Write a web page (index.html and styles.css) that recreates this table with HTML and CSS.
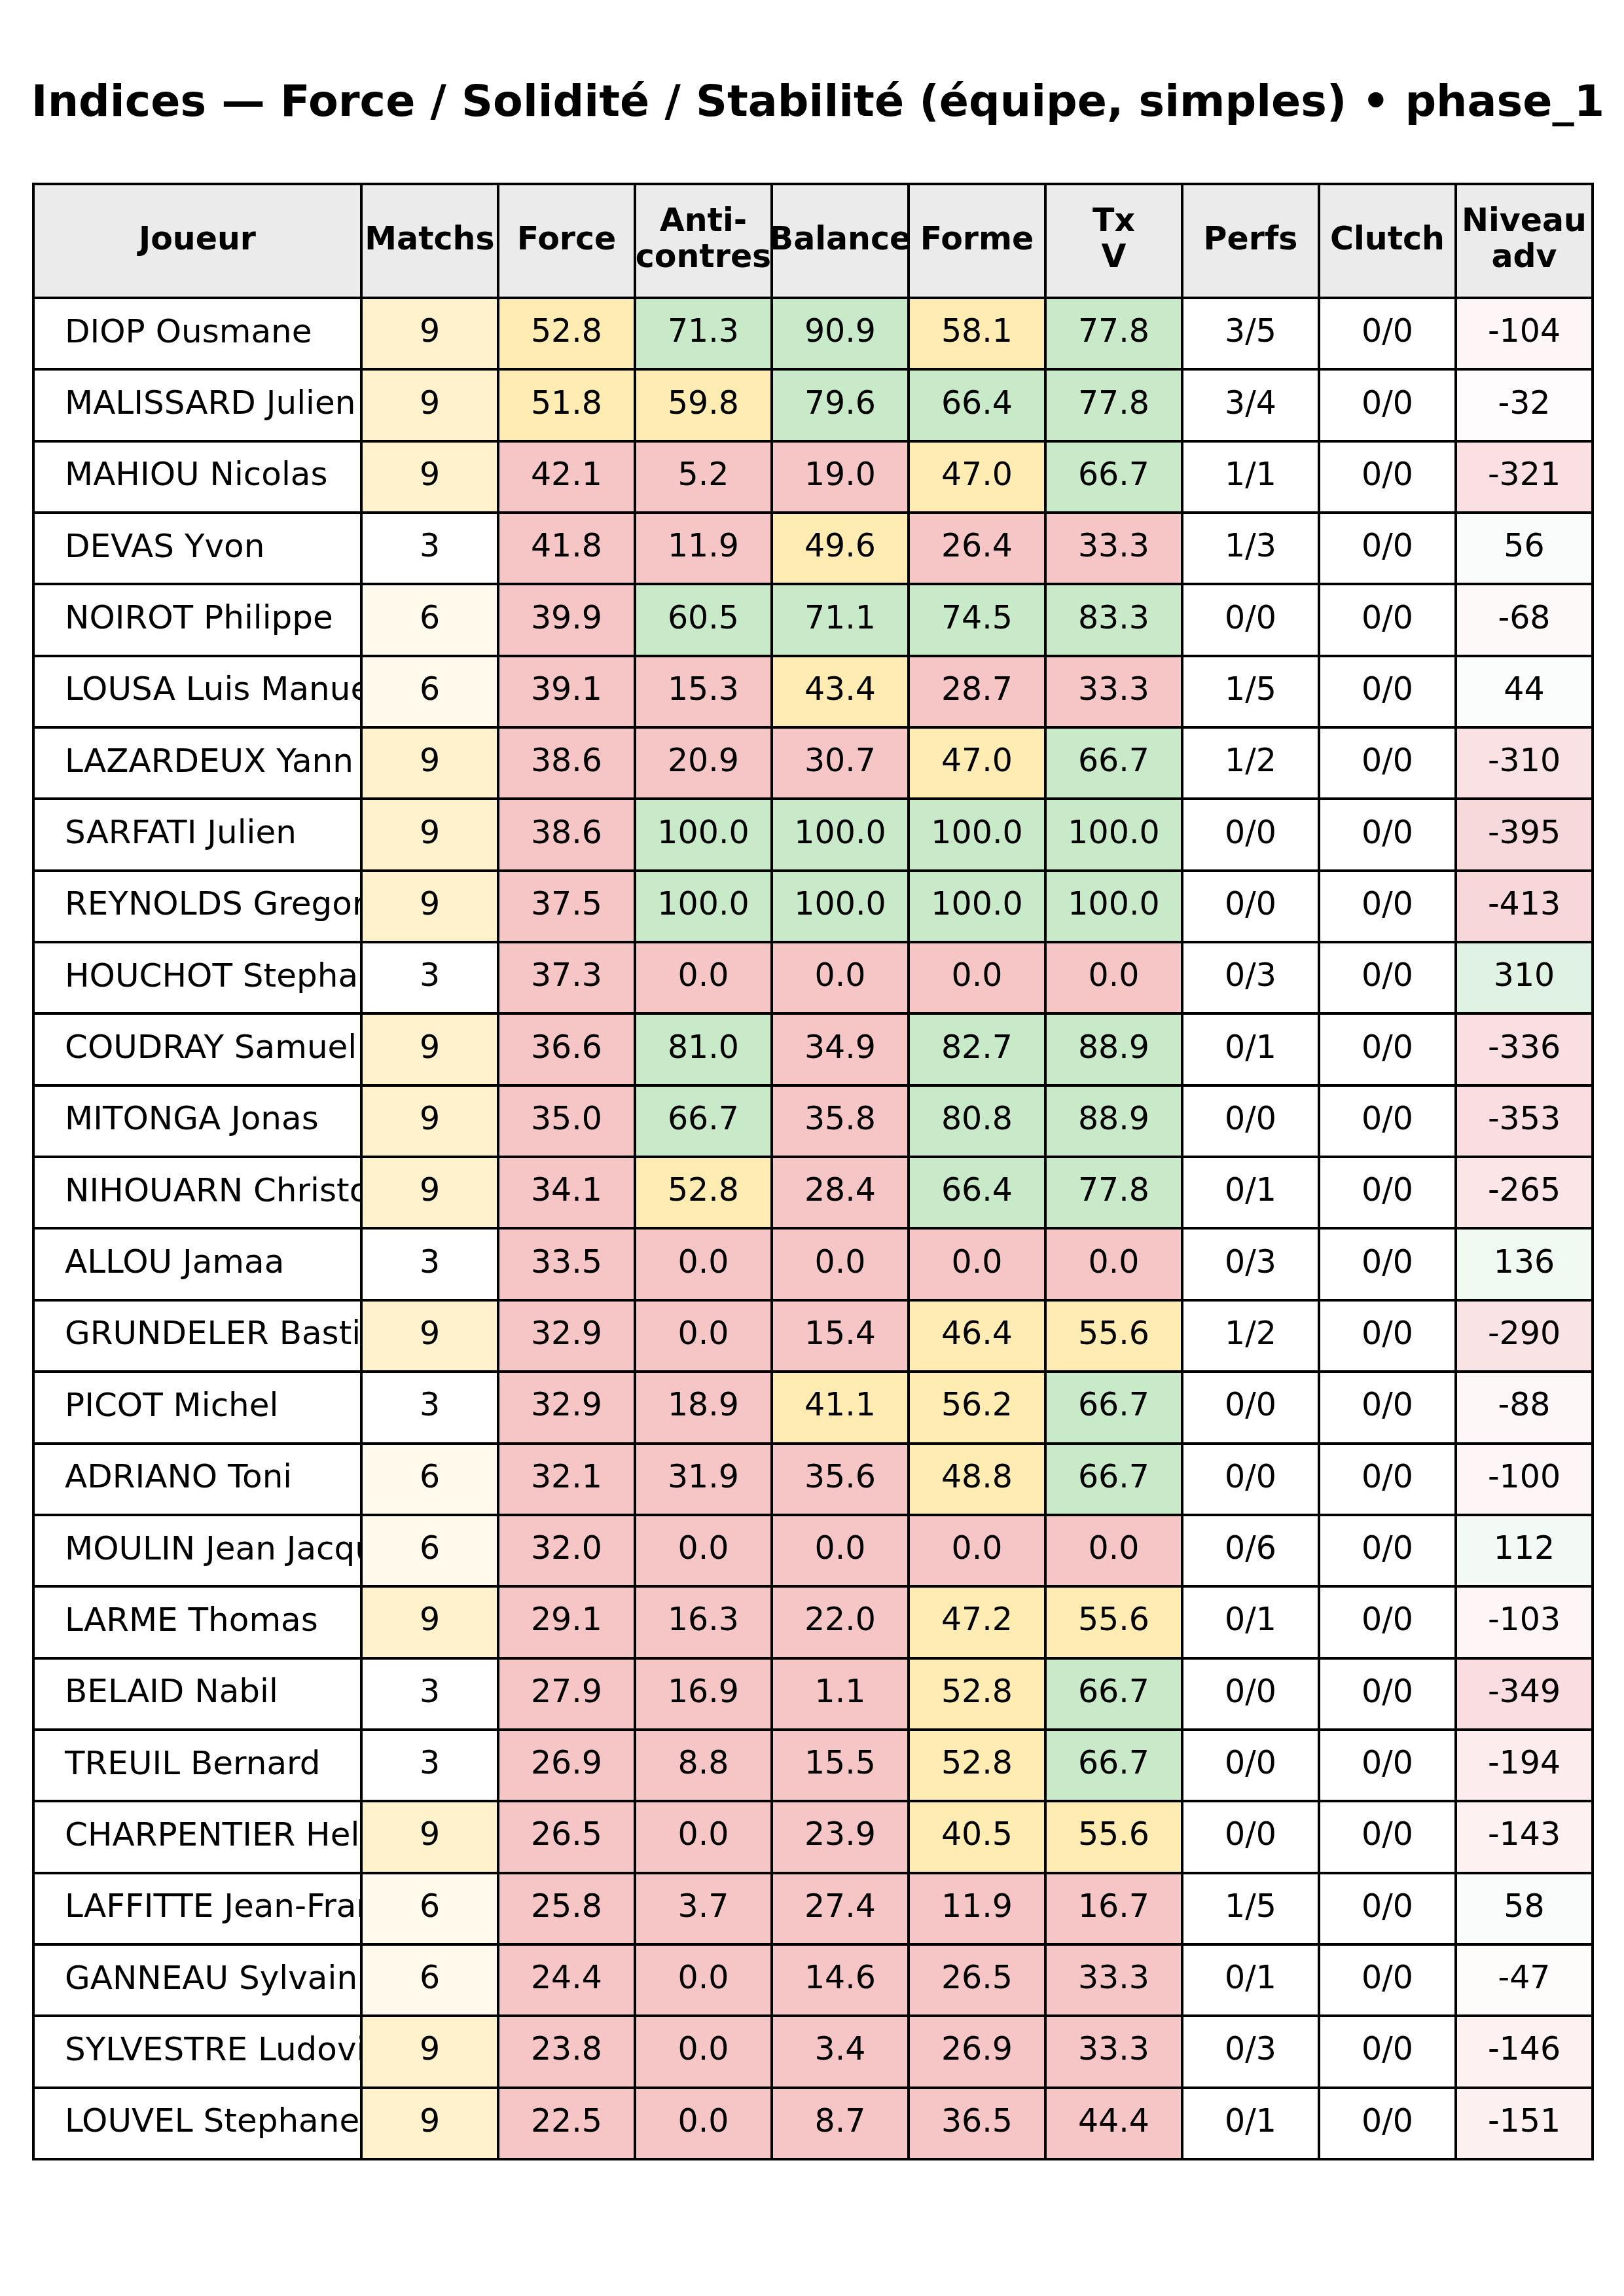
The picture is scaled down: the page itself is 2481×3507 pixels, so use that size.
FILE: index.html
```html
<!DOCTYPE html>
<html lang="fr">
<head>
<meta charset="utf-8">
<title>Indices — Force / Solidité / Stabilité</title>
<link rel="stylesheet" href="styles.css">
</head>
<body>
<div class="page">
  <h1 class="title">Indices — Force / Solidité / Stabilité (équipe, simples) • phase_1</h1>
  <table class="grid">
    <colgroup>
      <col class="c-name"><col class="c-num"><col class="c-num"><col class="c-num"><col class="c-num"><col class="c-num"><col class="c-num"><col class="c-num"><col class="c-num"><col class="c-num">
    </colgroup>
    <thead>
      <tr>
        <th><div class="h">Joueur</div></th>
        <th><div class="h">Matchs</div></th>
        <th><div class="h">Force</div></th>
        <th><div class="h">Anti-<br>contres</div></th>
        <th><div class="h">Balance</div></th>
        <th><div class="h">Forme</div></th>
        <th><div class="h">Tx<br>V</div></th>
        <th><div class="h">Perfs</div></th>
        <th><div class="h">Clutch</div></th>
        <th><div class="h">Niveau<br>adv</div></th>
      </tr>
    </thead>
    <tbody>
      <tr><td class="name">DIOP Ousmane</td><td class="m9">9</td><td class="y">52.8</td><td class="g">71.3</td><td class="g">90.9</td><td class="y">58.1</td><td class="g">77.8</td><td>3/5</td><td>0/0</td><td class="neg" style="--t:25%">-104</td></tr>
      <tr><td class="name">MALISSARD Julien</td><td class="m9">9</td><td class="y">51.8</td><td class="y">59.8</td><td class="g">79.6</td><td class="g">66.4</td><td class="g">77.8</td><td>3/4</td><td>0/0</td><td class="neg" style="--t:8%">-32</td></tr>
      <tr><td class="name">MAHIOU Nicolas</td><td class="m9">9</td><td class="r">42.1</td><td class="r">5.2</td><td class="r">19.0</td><td class="y">47.0</td><td class="g">66.7</td><td>1/1</td><td>0/0</td><td class="neg" style="--t:78%">-321</td></tr>
      <tr><td class="name">DEVAS Yvon</td><td class="m3">3</td><td class="r">41.8</td><td class="r">11.9</td><td class="y">49.6</td><td class="r">26.4</td><td class="r">33.3</td><td>1/3</td><td>0/0</td><td class="pos" style="--t:14%">56</td></tr>
      <tr><td class="name">NOIROT Philippe</td><td class="m6">6</td><td class="r">39.9</td><td class="g">60.5</td><td class="g">71.1</td><td class="g">74.5</td><td class="g">83.3</td><td>0/0</td><td>0/0</td><td class="neg" style="--t:16%">-68</td></tr>
      <tr><td class="name">LOUSA Luis Manuel</td><td class="m6">6</td><td class="r">39.1</td><td class="r">15.3</td><td class="y">43.4</td><td class="r">28.7</td><td class="r">33.3</td><td>1/5</td><td>0/0</td><td class="pos" style="--t:11%">44</td></tr>
      <tr><td class="name">LAZARDEUX Yann</td><td class="m9">9</td><td class="r">38.6</td><td class="r">20.9</td><td class="r">30.7</td><td class="y">47.0</td><td class="g">66.7</td><td>1/2</td><td>0/0</td><td class="neg" style="--t:75%">-310</td></tr>
      <tr><td class="name">SARFATI Julien</td><td class="m9">9</td><td class="r">38.6</td><td class="g">100.0</td><td class="g">100.0</td><td class="g">100.0</td><td class="g">100.0</td><td>0/0</td><td>0/0</td><td class="neg" style="--t:96%">-395</td></tr>
      <tr><td class="name">REYNOLDS Gregory</td><td class="m9">9</td><td class="r">37.5</td><td class="g">100.0</td><td class="g">100.0</td><td class="g">100.0</td><td class="g">100.0</td><td>0/0</td><td>0/0</td><td class="neg" style="--t:100%">-413</td></tr>
      <tr><td class="name">HOUCHOT Stephane</td><td class="m3">3</td><td class="r">37.3</td><td class="r">0.0</td><td class="r">0.0</td><td class="r">0.0</td><td class="r">0.0</td><td>0/3</td><td>0/0</td><td class="pos" style="--t:75%">310</td></tr>
      <tr><td class="name">COUDRAY Samuel</td><td class="m9">9</td><td class="r">36.6</td><td class="g">81.0</td><td class="r">34.9</td><td class="g">82.7</td><td class="g">88.9</td><td>0/1</td><td>0/0</td><td class="neg" style="--t:81%">-336</td></tr>
      <tr><td class="name">MITONGA Jonas</td><td class="m9">9</td><td class="r">35.0</td><td class="g">66.7</td><td class="r">35.8</td><td class="g">80.8</td><td class="g">88.9</td><td>0/0</td><td>0/0</td><td class="neg" style="--t:85%">-353</td></tr>
      <tr><td class="name">NIHOUARN Christophe</td><td class="m9">9</td><td class="r">34.1</td><td class="y">52.8</td><td class="r">28.4</td><td class="g">66.4</td><td class="g">77.8</td><td>0/1</td><td>0/0</td><td class="neg" style="--t:64%">-265</td></tr>
      <tr><td class="name">ALLOU Jamaa</td><td class="m3">3</td><td class="r">33.5</td><td class="r">0.0</td><td class="r">0.0</td><td class="r">0.0</td><td class="r">0.0</td><td>0/3</td><td>0/0</td><td class="pos" style="--t:33%">136</td></tr>
      <tr><td class="name">GRUNDELER Bastien</td><td class="m9">9</td><td class="r">32.9</td><td class="r">0.0</td><td class="r">15.4</td><td class="y">46.4</td><td class="y">55.6</td><td>1/2</td><td>0/0</td><td class="neg" style="--t:70%">-290</td></tr>
      <tr><td class="name">PICOT Michel</td><td class="m3">3</td><td class="r">32.9</td><td class="r">18.9</td><td class="y">41.1</td><td class="y">56.2</td><td class="g">66.7</td><td>0/0</td><td>0/0</td><td class="neg" style="--t:21%">-88</td></tr>
      <tr><td class="name">ADRIANO Toni</td><td class="m6">6</td><td class="r">32.1</td><td class="r">31.9</td><td class="r">35.6</td><td class="y">48.8</td><td class="g">66.7</td><td>0/0</td><td>0/0</td><td class="neg" style="--t:24%">-100</td></tr>
      <tr><td class="name">MOULIN Jean Jacques</td><td class="m6">6</td><td class="r">32.0</td><td class="r">0.0</td><td class="r">0.0</td><td class="r">0.0</td><td class="r">0.0</td><td>0/6</td><td>0/0</td><td class="pos" style="--t:27%">112</td></tr>
      <tr><td class="name">LARME Thomas</td><td class="m9">9</td><td class="r">29.1</td><td class="r">16.3</td><td class="r">22.0</td><td class="y">47.2</td><td class="y">55.6</td><td>0/1</td><td>0/0</td><td class="neg" style="--t:25%">-103</td></tr>
      <tr><td class="name">BELAID Nabil</td><td class="m3">3</td><td class="r">27.9</td><td class="r">16.9</td><td class="r">1.1</td><td class="y">52.8</td><td class="g">66.7</td><td>0/0</td><td>0/0</td><td class="neg" style="--t:85%">-349</td></tr>
      <tr><td class="name">TREUIL Bernard</td><td class="m3">3</td><td class="r">26.9</td><td class="r">8.8</td><td class="r">15.5</td><td class="y">52.8</td><td class="g">66.7</td><td>0/0</td><td>0/0</td><td class="neg" style="--t:47%">-194</td></tr>
      <tr><td class="name">CHARPENTIER Helene</td><td class="m9">9</td><td class="r">26.5</td><td class="r">0.0</td><td class="r">23.9</td><td class="y">40.5</td><td class="y">55.6</td><td>0/0</td><td>0/0</td><td class="neg" style="--t:35%">-143</td></tr>
      <tr><td class="name">LAFFITTE Jean-François</td><td class="m6">6</td><td class="r">25.8</td><td class="r">3.7</td><td class="r">27.4</td><td class="r">11.9</td><td class="r">16.7</td><td>1/5</td><td>0/0</td><td class="pos" style="--t:14%">58</td></tr>
      <tr><td class="name">GANNEAU Sylvain</td><td class="m6">6</td><td class="r">24.4</td><td class="r">0.0</td><td class="r">14.6</td><td class="r">26.5</td><td class="r">33.3</td><td>0/1</td><td>0/0</td><td class="neg" style="--t:11%">-47</td></tr>
      <tr><td class="name">SYLVESTRE Ludovic</td><td class="m9">9</td><td class="r">23.8</td><td class="r">0.0</td><td class="r">3.4</td><td class="r">26.9</td><td class="r">33.3</td><td>0/3</td><td>0/0</td><td class="neg" style="--t:35%">-146</td></tr>
      <tr><td class="name">LOUVEL Stephane</td><td class="m9">9</td><td class="r">22.5</td><td class="r">0.0</td><td class="r">8.7</td><td class="r">36.5</td><td class="r">44.4</td><td>0/1</td><td>0/0</td><td class="neg" style="--t:37%">-151</td></tr>
    </tbody>
  </table>
</div>
</body>
</html>
```

FILE: styles.css
```css
html, body {
  margin: 0;
  padding: 0;
  background: #ffffff;
}

body {
  font-family: "DejaVu Sans", "Liberation Sans", sans-serif;
  color: #000000;
}

.page {
  width: 2481px;
  height: 3507px;
  box-sizing: border-box;
  padding-top: 114px;
  overflow: hidden;
}

.title {
  margin: 0 0 85px 0;
  font-size: 66.67px;
  font-weight: bold;
  line-height: 80px;
  text-align: center;
  white-space: nowrap;
  padding-left: 18px;
}

.grid {
  margin-left: 49px;
  width: 2384px;
  table-layout: fixed;
  border-collapse: collapse;
  font-size: 49px;
}

.c-name { width: 501px; }
.c-num { width: 209px; }

.grid th,
.grid td {
  border: 4px solid #000000;
  padding: 0 0 8px 0;
  overflow: hidden;
  white-space: nowrap;
  text-align: center;
  vertical-align: middle;
  background: #ffffff;
}

.grid thead tr { height: 174px; }
.grid tbody tr { height: 109.35px; }

.grid th {
  background: #ebebeb;
  font-weight: bold;
}

.h {
  display: flex;
  flex-direction: column;
  align-items: center;
  justify-content: center;
  overflow: hidden;
  line-height: 55px;
}

.grid td.name {
  text-align: left;
  padding-left: 46px;
  font-size: 50px;
}

.grid td.m9 { background: #fff2cc; }
.grid td.m6 { background: #fffaeb; }
.grid td.m3 { background: #ffffff; }

.grid td.y { background: #ffecb3; }
.grid td.g { background: #c8eac8; }
.grid td.r { background: #f6c6c6; }

.grid td.neg { background: color-mix(in srgb, #f8d7da var(--t), #ffffff); }
.grid td.pos { background: color-mix(in srgb, #d4edda var(--t), #ffffff); }
```
